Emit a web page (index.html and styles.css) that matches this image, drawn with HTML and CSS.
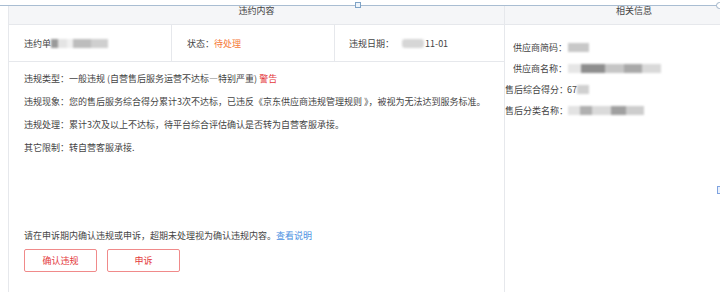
FILE: index.html
```html
<!DOCTYPE html>
<html lang="zh-CN">
<head>
<meta charset="utf-8">
<link rel="stylesheet" href="styles.css">
</head>
<body>
<div class="sel-line"></div>
<div class="handle handle-top"></div>
<div class="handle-corner"></div>
<div class="handle-right"></div>
<div class="frame">
  <section class="left">
    <div class="head">违约内容</div>
    <div class="meta">
      <div class="cell">违约单<span class="blur b1"></span></div>
      <div class="cell">状态：<span class="orange">待处理</span></div>
      <div class="cell last">违规日期：<span class="blur b2"></span>11-01</div>
    </div>
    <div class="content">
      <p>违规类型：一般违规 (自营售后服务运营不达标—特别严重) <span class="red">警告</span></p>
      <p>违规现象：您的售后服务综合得分累计3次不达标，已违反《京东供应商违规管理规则 》，被视为无法达到服务标准。</p>
      <p>违规处理：累计3次及以上不达标，待平台综合评估确认是否转为自营客服承接。</p>
      <p>其它限制：转自营客服承接.</p>
      <div class="notice">请在申诉期内确认违规或申诉，超期未处理视为确认违规内容。<span class="link">查看说明</span></div>
      <div class="actions">
        <button class="btn">确认违规</button>
        <button class="btn">申诉</button>
      </div>
    </div>
  </section>
  <section class="right">
    <div class="head head-right">相关信息</div>
    <div class="info">
      <div class="row"><span class="lbl">供应商简码：</span><span class="blur b3"></span></div>
      <div class="row"><span class="lbl">供应商名称：</span><span class="blur b4"></span></div>
      <div class="row"><span class="lbl">售后综合得分：</span>67<span class="blur b5"></span></div>
      <div class="row"><span class="lbl">售后分类名称：</span><span class="blur b6"></span></div>
    </div>
  </section>
</div>
</body>
</html>
```
FILE: styles.css
```css
html, body {
  margin: 0;
  padding: 0;
  background: #fff;
  overflow: hidden;
  width: 720px;
  height: 292px;
}
body {
  position: relative;
  font-family: "Noto Sans CJK SC", "Noto Sans", sans-serif;
  font-size: 9px;
  color: #444;
}
.sel-line {
  position: absolute;
  left: 0;
  top: 5px;
  width: 718px;
  height: 1px;
  background: #a9bdd2;
}
.handle {
  position: absolute;
  width: 4px;
  height: 4px;
  border: 1px solid #7fa3c6;
  background: #eef4fa;
}
.handle-top { left: 355px; top: 2px; }
.handle-corner {
  position: absolute;
  left: 716px;
  top: 2px;
  width: 5px;
  height: 5px;
  border: 1px solid #9fb3c8;
  border-radius: 50%;
  background: #fff;
}
.handle-right {
  position: absolute;
  left: 717px;
  top: 186px;
  width: 2px;
  height: 6px;
  border: 1px solid #7fa3e0;
  background: #eaf1fb;
}
.frame {
  display: flex;
  margin-left: 8px;
  padding-top: 6px;
  height: 286px;
}
.left {
  width: 495px;
  border-left: 1px solid #e6e8ec;
  border-right: 1px solid #e6e8ec;
  display: flex;
  flex-direction: column;
}
.right {
  flex: 1;
  min-width: 0;
}
.head {
  height: 18px;
  line-height: 9px;
  background: #f5f6f8;
  border-bottom: 1px solid #e6e8ec;
  text-align: center;
  color: #444;
}
.head-right {
  padding-left: 43px;
}
.meta {
  display: flex;
  height: 36px;
  border-bottom: 1px solid #e6e8ec;
}
.cell {
  width: 147px;
  padding-left: 15px;
  border-right: 1px solid #e6e8ec;
  display: flex;
  align-items: center;
}
.cell.last {
  width: 155px;
  border-right: none;
  padding-left: 14px;
}
.orange { color: #f5793a; }
.red { color: #e4393c; }
.link { color: #4a90e2; }
.blur {
  display: inline-block;
  height: 9px;
  filter: blur(1px);
  vertical-align: middle;
}
.b1 {
  width: 57px;
  background: linear-gradient(90deg, #9a9a9a 0 12%, #e4e4e4 12% 28%, #f0f0f0 28% 38%, #bdbdbd 38% 70%, #cfcfcf 70% 100%);
}
.b2 {
  width: 22px;
  margin: 0 1px 0 8px;
  background: #d6d6d6;
  border-radius: 3px;
}
.b3 { width: 21px; margin-left: 1px; background: #c8c8c8; }
.b4 {
  width: 93px;
  margin-left: 1px;
  background: linear-gradient(90deg, #e6e6e6 0 14%, #8e8e8e 14% 40%, #c6c6c6 40% 60%, #a9a9a9 60% 80%, #d9d9d9 80% 100%);
}
.b5 { width: 12px; background: #d0d0d0; }
.b6 {
  width: 76px;
  margin-left: 1px;
  background: linear-gradient(90deg, #e3e3e3 0 16%, #b0b0b0 16% 32%, #dadada 32% 56%, #a0a0a0 56% 76%, #cdcdcd 76% 100%);
}
.content {
  padding: 5px 0 0 15px;
  display: flex;
  flex-direction: column;
}
.content p {
  margin: 0;
  line-height: 23px;
}
.notice {
  margin-top: 70px;
  line-height: 14px;
}
.actions {
  display: flex;
  gap: 10px;
  margin-top: 6px;
}
.btn {
  width: 73px;
  height: 23px;
  padding: 0;
  border: 1px solid #f08a8a;
  border-radius: 2px;
  background: #fff;
  color: #e4393c;
  font-family: inherit;
  font-size: 9px;
}
.info {
  padding-top: 12px;
}
.row {
  display: flex;
  align-items: center;
  height: 21px;
}
.lbl {
  width: 62px;
  text-align: right;
  white-space: nowrap;
}
```
